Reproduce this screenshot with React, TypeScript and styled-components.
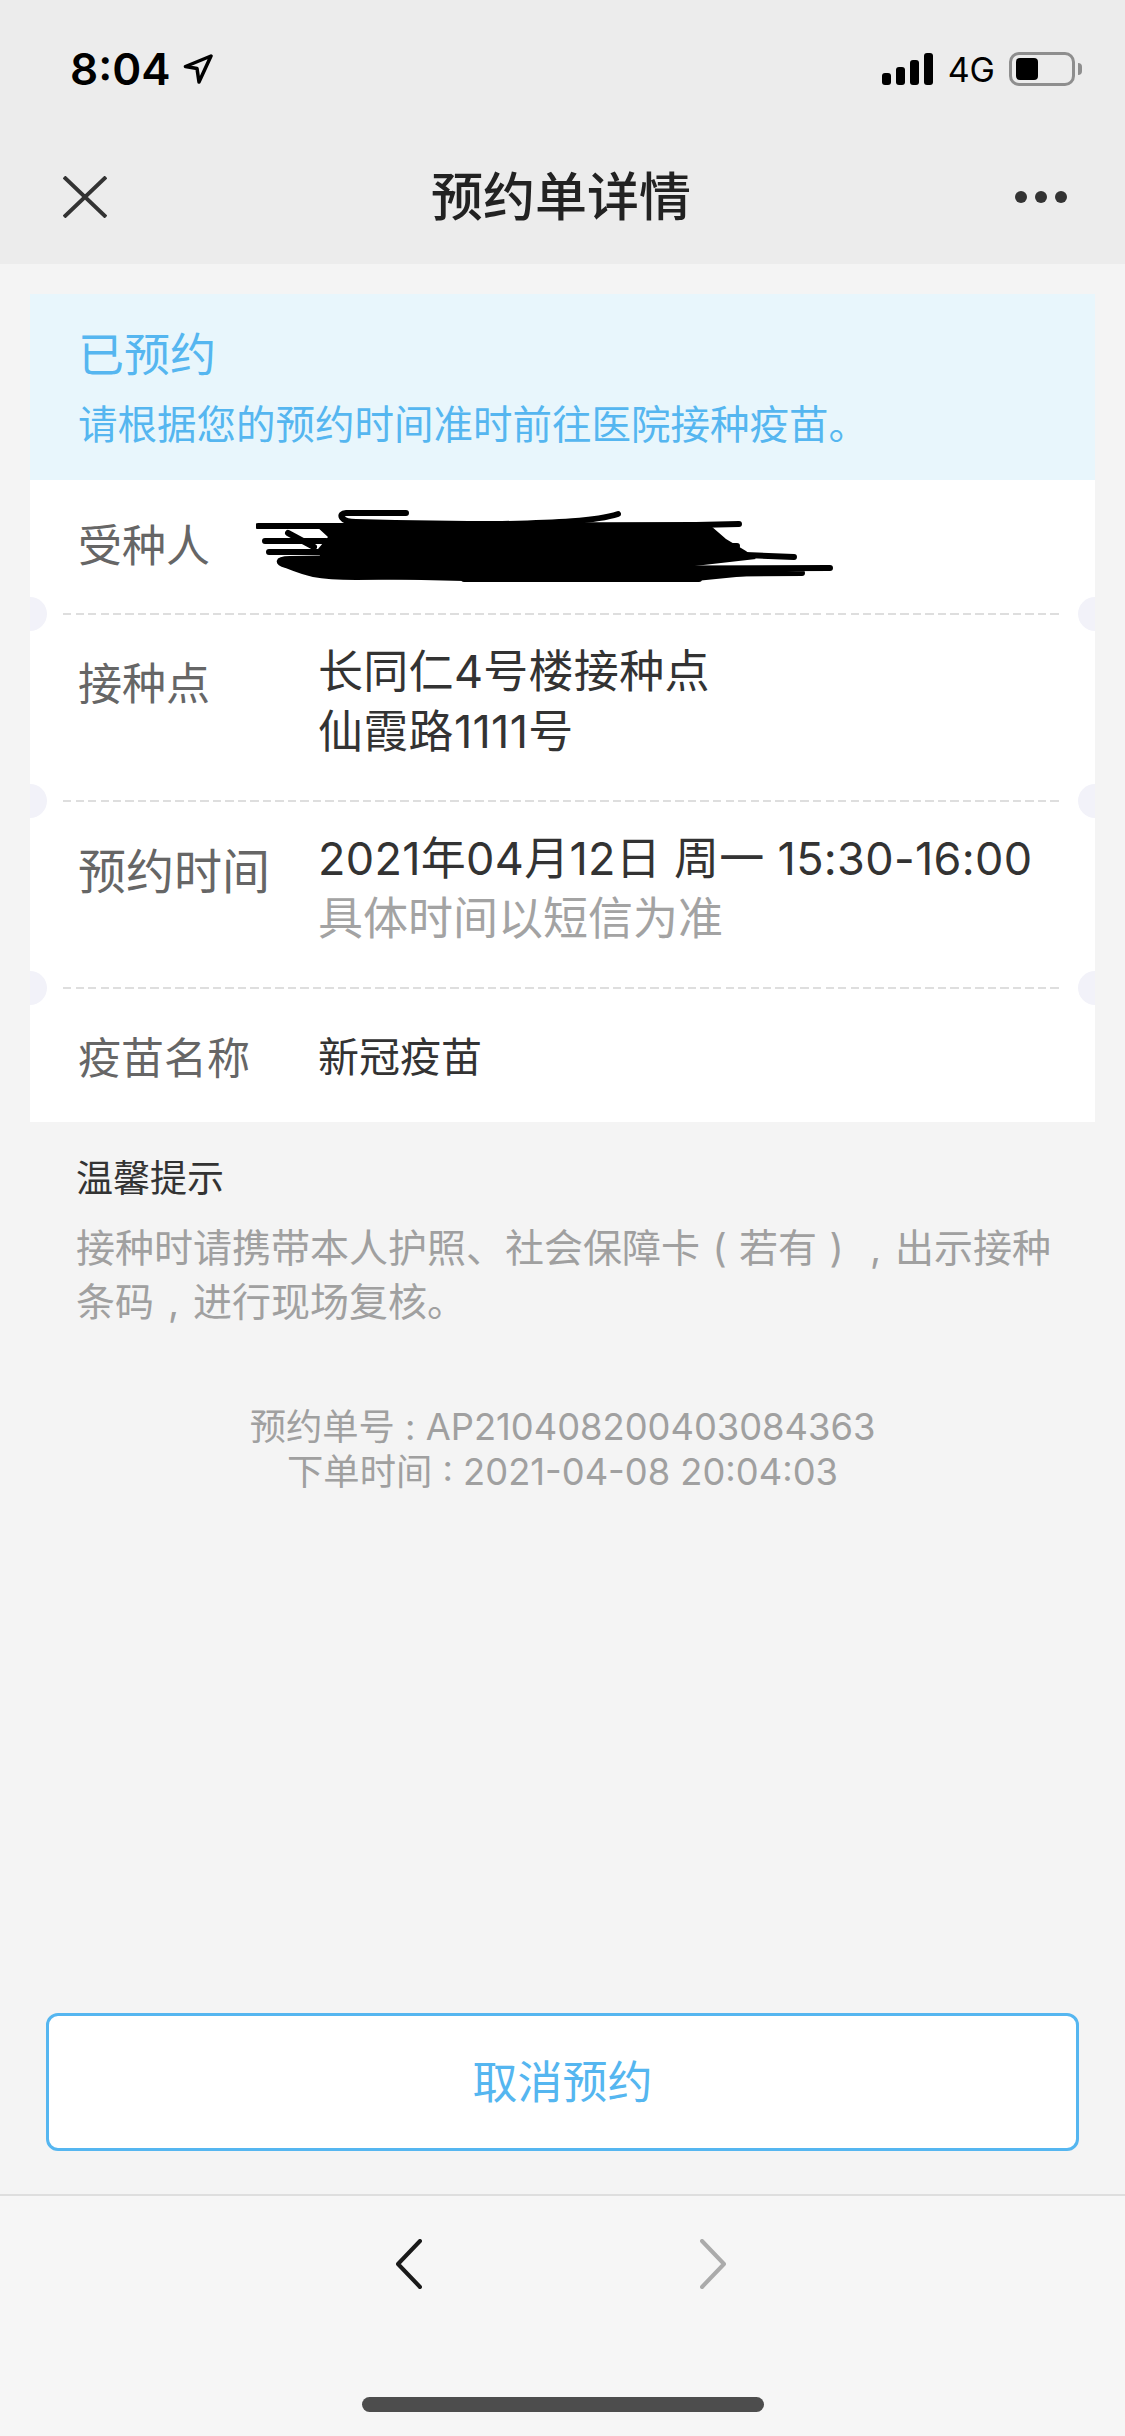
import React from "react"
import styled, { createGlobalStyle } from "styled-components"

const blue = "#55b6f0"
const fontStack = `"Inter", "Noto Sans CJK SC", sans-serif`

const GlobalStyle = createGlobalStyle`
    html, body {
        margin: 0;
        padding: 0;
        background: #f4f4f4;
    }
    * {
        box-sizing: border-box;
    }
`

const Page = styled.div`
    width: 1125px;
    height: 2436px;
    display: flex;
    flex-direction: column;
    background: #f4f4f4;
    font-family: ${fontStack};
    overflow: hidden;
`

const Header = styled.header`
    height: 264px;
    flex: none;
    background: #ececec;
    display: flex;
    flex-direction: column;
`

const StatusBar = styled.div`
    height: 116px;
    padding: 52px 50px 0 70px;
    display: flex;
    justify-content: space-between;
    align-items: flex-start;
`

const StatusLeft = styled.div`
    display: flex;
    align-items: center;
    height: 34px;
    gap: 12px;
`

const Clock = styled.span`
    font-size: 44px;
    font-weight: 600;
    color: #000;
`

const StatusRight = styled.div`
    display: flex;
    align-items: center;
    height: 34px;
`

const Signal = styled.div`
    display: flex;
    align-items: flex-end;
    gap: 5px;
    height: 32px;
    margin-right: 15px;
`

const SignalBar = styled.i<{ $h: number }>`
    display: block;
    width: 9px;
    height: ${p => p.$h}px;
    background: #000;
    border-radius: 3px;
`

const Network = styled.span`
    font-size: 34px;
    color: #000;
    margin-right: 14px;
`

const Battery = styled.div`
    position: relative;
    width: 66px;
    height: 34px;
    border: 3px solid #8e8e8e;
    border-radius: 10px;
    padding: 3px 4px;

    &::after {
        content: "";
        position: absolute;
        right: -10px;
        top: 8px;
        width: 4px;
        height: 12px;
        background: #8e8e8e;
        border-radius: 0 4px 4px 0;
    }
`

const BatteryLevel = styled.div`
    width: 22px;
    height: 22px;
    background: #000;
    border-radius: 4px;
`

const NavBar = styled.div`
    flex: 1;
    padding: 0 58px 0 63px;
    display: flex;
    align-items: flex-start;
    justify-content: space-between;
`

const CloseIcon = styled.svg`
    margin-top: 60px;
    width: 44px;
    height: 42px;
    color: #333;
`

const Title = styled.h1`
    margin: 47px 0 0;
    font-size: 52px;
    line-height: 70px;
    font-weight: 500;
    color: #222;
`

const More = styled.div`
    margin-top: 75px;
    display: flex;
    gap: 8px;
`

const Dot = styled.i`
    display: block;
    width: 12px;
    height: 12px;
    border-radius: 50%;
    background: #333;
`

const Card = styled.section`
    margin: 30px 30px 0;
    background: #fff;
    overflow: hidden;
`

const Banner = styled.div`
    height: 186px;
    padding: 29px 48px 0;
    background: #e8f6fc;
    color: ${blue};
`

const BannerTitle = styled.div`
    font-size: 46px;
    line-height: 62px;
`

const BannerText = styled.div`
    font-size: 39.5px;
    line-height: 56px;
    margin-top: 12px;
`

const Row = styled.div<{ $h: number; $center?: boolean; $pt?: number }>`
    height: ${p => p.$h}px;
    padding: ${p => p.$pt ?? 0}px 48px 0;
    display: flex;
    align-items: ${p => (p.$center ? "center" : "flex-start")};
`

const Label = styled.div<{ $size?: number; $offset?: number }>`
    width: 240px;
    flex: none;
    font-size: ${p => p.$size ?? 44}px;
    line-height: 57px;
    margin-top: ${p => p.$offset ?? 0}px;
    color: #666;
    white-space: nowrap;
`

const Value = styled.div`
    position: relative;
    flex: 1;
`

const ValueLine = styled.div<{ $muted?: boolean; $size?: number }>`
    font-size: ${p => p.$size ?? 45}px;
    line-height: 59.5px;
    letter-spacing: ${p => (p.$muted || p.$size ? 0 : 0.3)}px;
    color: ${p => (p.$muted ? "#a3a3a3" : "#333")};
    white-space: nowrap;
`

const Divider = styled.div`
    position: relative;
    height: 2px;
    flex: none;
    margin: 0 33px;
    background: repeating-linear-gradient(90deg, #dedede 0 8px, transparent 8px 12.5px);

    &::before, &::after {
        content: "";
        position: absolute;
        top: -16px;
        width: 34px;
        height: 34px;
        border-radius: 50%;
        background: #f2f2f9;
    }
    &::before {
        left: -50px;
    }
    &::after {
        right: -50px;
    }
`

const Scribble = styled.svg`
    position: absolute;
    left: -62px;
    top: -38px;
    width: 580px;
    height: 74px;
`

const Tips = styled.section`
    padding: 30px 76px 0;
`

const TipsTitle = styled.div`
    font-size: 37px;
    line-height: 54px;
    color: #333;
`

const TipsText = styled.p`
    margin: 15px -10px 0 0;
    font-size: 39px;
    line-height: 54px;
    color: #a0a0a0;
`

const Punct = styled.span`
    display: inline-block;
    width: 1em;
    text-align: center;
`

const Meta = styled.div`
    margin-top: 76px;
    text-align: center;
    font-size: 36.3px;
    line-height: 45px;
    color: #a0a0a0;
    font-weight: 400;
`

const Spacer = styled.div`
    flex: 1;
`

const CancelButton = styled.button`
    display: block;
    flex: none;
    width: 1033px;
    height: 138px;
    margin: 0 46px 43px;
    padding: 0 0 5px;
    background: #fff;
    border: 3px solid ${blue};
    border-radius: 12px;
    color: ${blue};
    font-family: ${fontStack};
    font-size: 45px;
`

const BottomBar = styled.footer`
    height: 242px;
    flex: none;
    background: #f6f6f6;
    border-top: 2px solid #dedede;
    display: flex;
    flex-direction: column;
    align-items: center;
`

const Arrows = styled.div`
    display: flex;
    justify-content: center;
    gap: 278px;
    margin: 43px 0 0 -3px;
`

const Chevron = styled.svg<{ $off?: boolean }>`
    width: 26px;
    height: 50px;
    color: ${p => (p.$off ? "#ababab" : "#1a1a1a")};
`

const HomeIndicator = styled.div`
    width: 402px;
    height: 15px;
    margin-top: 108px;
    background: #4d4d4d;
    border-radius: 8px;
`

const App = () => {
    return (
        <Page>
            <GlobalStyle />
            <Header>
                <StatusBar>
                    <StatusLeft>
                        <Clock>8:04</Clock>
                        <svg width="30" height="30" viewBox="0 0 30 30" fill="none" stroke="#000" strokeWidth="3.5" strokeLinejoin="round">
                            <path d="M28 2 L2.5 12.5 L14 14.5 L16 28 Z" />
                        </svg>
                    </StatusLeft>
                    <StatusRight>
                        <Signal>
                            <SignalBar $h={12} />
                            <SignalBar $h={18} />
                            <SignalBar $h={25} />
                            <SignalBar $h={32} />
                        </Signal>
                        <Network>4G</Network>
                        <Battery>
                            <BatteryLevel />
                        </Battery>
                    </StatusRight>
                </StatusBar>
                <NavBar>
                    <CloseIcon viewBox="0 0 44 42" fill="none" stroke="currentColor" strokeWidth="4">
                        <path d="M1 1 L43 41 M43 1 L1 41" />
                    </CloseIcon>
                    <Title>预约单详情</Title>
                    <More>
                        <Dot />
                        <Dot />
                        <Dot />
                    </More>
                </NavBar>
            </Header>

            <Card>
                <Banner>
                    <BannerTitle>已预约</BannerTitle>
                    <BannerText>请根据您的预约时间准时前往医院接种疫苗。</BannerText>
                </Banner>
                <Row $h={133} $center>
                    <Label>受种人</Label>
                    <Value>
                        {/* redaction scribble over the name */}
                        <Scribble viewBox="0 0 580 74" fill="none" stroke="#000" strokeWidth="6" strokeLinecap="round">
                            <path d="M150 4 L90 4 C82 4 84 13 100 13 C140 14 200 15 246 15 C300 14 340 12 362 5" />
                            <path d="M2 17 L120 17 L440 16 L483 15" />
                            <path d="M32 24 L58 38 M9 32 L70 32 M13 43 L70 43 M445 26 L461 28 M440 37 L481 37 M440 44 L538 48" />
                            <path d="M91 49 L34 50 C20 50 22 54 30 56 C50 64 60 68 100 68 L546 64 M246 60 L574 59 M208 70 L443 70" />
                            <path d="M60 17 L455 17 L470 30 L490 42 L500 50 L430 58 L540 62 L440 72 L208 72 L80 69 L45 60 L26 52 L34 47 L64 47 L62 40 L72 28 Z" fill="#000" stroke="none" />
                        </Scribble>
                    </Value>
                </Row>
                <Divider />
                <Row $h={185} $pt={27}>
                    <Label $offset={14}>接种点</Label>
                    <Value>
                        <ValueLine>长同仁4号楼接种点</ValueLine>
                        <ValueLine>仙霞路1111号</ValueLine>
                    </Value>
                </Row>
                <Divider />
                <Row $h={185} $pt={27}>
                    <Label $size={48} $offset={14}>预约时间</Label>
                    <Value>
                        <ValueLine>2021年04月12日 周一 15:30-16:00</ValueLine>
                        <ValueLine $muted>具体时间以短信为准</ValueLine>
                    </Value>
                </Row>
                <Divider />
                <Row $h={133} $center $pt={5}>
                    <Label $size={43}>疫苗名称</Label>
                    <Value>
                        <ValueLine $size={41}>新冠疫苗</ValueLine>
                    </Value>
                </Row>
            </Card>

            <Tips>
                <TipsTitle>温馨提示</TipsTitle>
                <TipsText>
                    接种时请携带本人护照、社会保障卡<Punct>(</Punct>若有<Punct>)</Punct><Punct>,</Punct>出示接种条码<Punct>,</Punct>进行现场复核。
                </TipsText>
            </Tips>

            <Meta>
                <div>预约单号 : AP210408200403084363</div>
                <div>下单时间 : 2021-04-08 20:04:03</div>
            </Meta>

            <Spacer />

            <CancelButton>取消预约</CancelButton>

            <BottomBar>
                <Arrows>
                    <Chevron viewBox="0 0 26 50" fill="none" stroke="currentColor" strokeWidth="4" strokeLinecap="round" strokeLinejoin="round">
                        <path d="M24 2 L2 25 L24 48" />
                    </Chevron>
                    <Chevron $off viewBox="0 0 26 50" fill="none" stroke="currentColor" strokeWidth="4" strokeLinecap="round" strokeLinejoin="round">
                        <path d="M2 2 L24 25 L2 48" />
                    </Chevron>
                </Arrows>
                <HomeIndicator />
            </BottomBar>
        </Page>
    )
}

export default App
